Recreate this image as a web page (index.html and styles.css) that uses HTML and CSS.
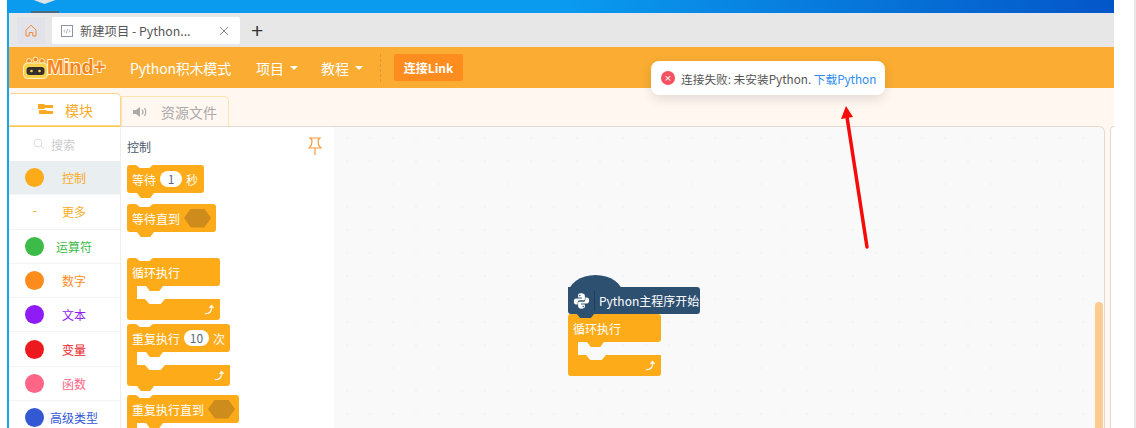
FILE: index.html
```html
<!DOCTYPE html>
<html lang="zh-CN">
  <head>
    <meta charset="UTF-8" />
    <title>Mind+ Python</title>
    <link rel="stylesheet" href="styles.css">
  </head>
  <body>
    <div class="desktop">
      <i class="desktop-icon"></i>
      <i class="desktop-label"></i>
    </div>
    <div class="window">
      <div class="tabbar">
        <div class="home-tab">
          <svg width="12" height="13" viewBox="0 0 12 13"><path d="M1 6 6 1.200 11 6V12H7.800V8.500H4.200V12H1Z" fill="none" stroke="#f08a3c" stroke-width="1"/></svg>
        </div>
        <div class="page-tab">
          <svg width="12" height="12" viewBox="0 0 12 12"><rect x=".5" y=".5" width="11" height="11" fill="none" stroke="#8b95a5"/><path d="M4 4.500 2.800 6 4 7.500M8 4.500 9.200 6 8 7.500M6.600 4 5.400 8" fill="none" stroke="#8b95a5" stroke-width=".7"/></svg>
          <span class="page-title">新建项目 - Python...</span>
          <svg class="page-close" width="10" height="10" viewBox="0 0 10 10"><path d="M1 1 9 9M9 1 1 9" stroke="#888" stroke-width="1"/></svg>
        </div>
        <span class="new-tab">+</span>
      </div>

      <div class="navbar">
        <div class="logo">
          <svg width="27" height="24" viewBox="0 0 27 24">
            <circle cx="7" cy="5" r="2.400" fill="#f5851f" stroke="#fff2c8"/>
            <circle cx="13.500" cy="3.500" r="2.400" fill="#f5851f" stroke="#fff2c8"/>
            <circle cx="20" cy="5" r="2.400" fill="#f5851f" stroke="#fff2c8"/>
            <rect x="1.500" y="7" width="24" height="15.500" rx="4" fill="#fbd04b" stroke="#fff2c8"/>
            <rect x="4.500" y="11" width="18" height="8" rx="3" fill="#33302c"/>
            <circle cx="9.500" cy="15" r="1.300" fill="#fbd04b"/>
            <circle cx="17.500" cy="15" r="1.300" fill="#fbd04b"/>
          </svg>
          <span class="logo-text">Mind+</span>
        </div>
        <a class="nav-item mode">Python积木模式</a>
        <a class="nav-item project">项目<i class="caret"></i></a>
        <a class="nav-item course">教程<i class="caret"></i></a>
        <div class="divider"></div>
        <a class="link-btn">连接Link</a>
      </div>

      <div class="tabs-row">
        <div class="tab active-tab">
          <svg width="15" height="11" viewBox="0 0 15 11"><path d="M0 0H6L7 1H15V4H7L6 5H0ZM1 6H8L9 7H15V10H1Z" fill="#fbab23"/></svg>
          <span>模块</span>
        </div>
        <div class="tab">
          <svg width="15" height="12" viewBox="0 0 15 12"><path d="M0 4H3L7 1V11L3 8H0Z" fill="#a9a9a9"/><path d="M9 3.500Q11 6 9 8.500M11.500 2Q14 6 11.500 10" fill="none" stroke="#a9a9a9" stroke-width="1.200"/></svg>
          <span>资源文件</span>
        </div>
      </div>

      <div class="workspace">
        <div class="categories">
          <div class="search">
            <svg width="12" height="12" viewBox="0 0 12 12"><circle cx="5" cy="5" r="4" fill="none" stroke="#ddd"/><path d="M8 8 11 11" stroke="#ddd"/></svg>
            <span>搜索</span>
          </div>
          <div class="cat selected"><i class="dot dot-control"></i><span class="c-control">控制</span></div>
          <div class="cat"><i class="dash"></i><span class="c-control">更多</span></div>
          <div class="cat"><i class="dot dot-op"></i><span class="c-op">运算符</span></div>
          <div class="cat"><i class="dot dot-num"></i><span class="c-num">数字</span></div>
          <div class="cat"><i class="dot dot-text"></i><span class="c-text">文本</span></div>
          <div class="cat"><i class="dot dot-var"></i><span class="c-var">变量</span></div>
          <div class="cat"><i class="dot dot-fn"></i><span class="c-fn">函数</span></div>
          <div class="cat"><i class="dot dot-adv"></i><span class="c-adv">高级类型</span></div>
        </div>

        <div class="flyout">
          <div class="flyout-head">
            <span>控制</span>
            <svg width="14" height="18" viewBox="0 0 14 18"><path d="M2 1H12L10 3 10.500 8 13 11H1L3.500 8 4 3ZM7 11V18" fill="none" stroke="#fb9a3c" stroke-width="1.200"/></svg>
          </div>
          <div class="block b-wait">等待 <b class="pill">1</b> 秒<i class="notch"></i></div>
          <div class="block b-until">等待直到 <b class="hex"></b><i class="notch"></i></div>
          <div class="loop l-forever">
            <div class="block loop-top">循环执行</div>
            <div class="loop-gap"><i class="inner-notch"></i></div>
            <div class="loop-foot"><i class="foot-notch"></i><span class="loop-arrow">⤴</span></div>
          </div>
          <div class="loop l-repeat">
            <div class="block loop-top">重复执行 <b class="pill wide">10</b> 次</div>
            <div class="loop-gap"><i class="inner-notch"></i></div>
            <div class="loop-foot"><i class="foot-notch"></i><span class="loop-arrow">⤴</span><i class="notch"></i></div>
          </div>
          <div class="loop l-until">
            <div class="block loop-top">重复执行直到 <b class="hex"></b></div>
            <div class="loop-gap"><i class="inner-notch"></i></div>
          </div>
        </div>

        <div class="canvas">
          <div class="stack">
            <div class="hat">
              <div class="hat-cap"></div>
              <div class="hat-body">
                <svg class="py" width="17" height="18" viewBox="0 0 20 20">
                  <path d="M10 1C6 1 6 2.500 6 4V6H10.500V7H3.500C2 7 1 8.500 1 10.500S2 14 3.500 14H5.500V11.500C5.500 10 6.500 9 8 9H12.500C13.500 9 14 8.500 14 7.500V4C14 2 12.500 1 10 1Z" fill="#fff"/>
                  <path d="M10 19C14 19 14 17.500 14 16V14H9.500V13H16.500C18 13 19 11.500 19 9.500S18 6 16.500 6H14.500V8.500C14.500 10 13.500 11 12 11H7.500C6.500 11 6 11.500 6 12.500V16C6 18 7.500 19 10 19Z" fill="#fff"/>
                  <circle cx="8" cy="3.500" r=".9" fill="#2e5070"/>
                  <circle cx="12" cy="16.500" r=".9" fill="#2e5070"/>
                </svg>
                <i class="hat-sep"></i>
                <span>Python主程序开始</span>
              </div>
              <i class="hat-notch"></i>
            </div>
            <div class="loop l-main">
              <div class="block loop-top">循环执行</div>
              <div class="loop-gap"><i class="inner-notch"></i></div>
              <div class="loop-foot"><i class="foot-notch"></i><span class="loop-arrow">⤴</span></div>
            </div>
          </div>
          <div class="scrollbar"></div>
        </div>
        <div class="right-panel"></div>
      </div>

      <div class="toast">
        <i class="toast-icon">×</i>
        <span>连接失败: 未安装Python. <a class="toast-link">下载Python</a></span>
      </div>

      <svg class="red-arrow" width="32" height="150" viewBox="0 0 32 150">
        <path d="M28 142 8 12" stroke="#f60a0a" stroke-width="3.500" stroke-linecap="round"/>
        <path d="M7 1 2 14 14 12Z" fill="#f60a0a"/>
      </svg>
    </div>
  </body>
</html>
```

FILE: styles.css
```css
* {
  box-sizing: border-box;
}

html,
body {
  margin: 0;
  height: 428px;
  overflow: hidden;
  background: #fff;
}

body {
  font-family: "Noto Sans CJK SC", "Noto Sans", sans-serif;
  font-size: 12px;
  color: #333;
  border-right: 2px solid #e8e8e8;
}

.desktop {
  position: relative;
  height: 13px;
  margin-left: 7px;
  margin-right: 20px;
  overflow: hidden;
  background: linear-gradient(90deg, #0a9bef 0%, #0a9bef 50%, #0456c8 100%);
}

.desktop-icon {
  position: absolute;
  left: 26px;
  top: -3px;
  width: 23px;
  height: 7px;
  background: #dfe3e6;
  clip-path: polygon(0 0, 100% 0, 100% 40%, 50% 100%, 0 40%);
}

.desktop-label {
  position: absolute;
  left: 24px;
  bottom: 0;
  width: 28px;
  height: 2px;
  background: #4a6a80;
}

.window {
  position: relative;
  height: 415px;
  margin-left: 7px;
  margin-right: 20px;
  border-left: 2px solid #15a5e8;
  background: #fff;
}

/* Browser tabs */
.tabbar {
  display: flex;
  align-items: center;
  height: 34px;
  padding: 4px 0 3px 8px;
  background: #e7e7e7;
}

.home-tab {
  display: flex;
  align-items: center;
  justify-content: center;
  width: 28px;
  height: 27px;
  background: #e1e2ea;
}

.page-tab {
  display: flex;
  align-items: center;
  width: 188px;
  height: 27px;
  margin-left: 7px;
  padding-left: 9px;
  background: #fff;
  border-radius: 2px;
}

.page-title {
  margin-left: 7px;
  font-size: 12.3px;
  color: #555;
}

.page-close {
  margin-left: auto;
  margin-right: 11px;
}

.new-tab {
  margin-left: 11px;
  font-family: "Liberation Sans", sans-serif;
  font-size: 21px;
  line-height: 21px;
  color: #333;
}

/* Orange app bar */
.navbar {
  display: flex;
  align-items: center;
  height: 41px;
  padding-left: 13px;
  background: #faad32;
  color: #fff;
}

.logo {
  display: flex;
  align-items: center;
  width: 108px;
}

.logo-text {
  margin-left: -2px;
  font-family: "Liberation Sans", sans-serif;
  font-size: 20px;
  font-weight: 700;
  color: #f5851f;
  -webkit-text-stroke: 2px #fff4dc;
  paint-order: stroke fill;
}

.nav-item {
  display: flex;
  align-items: center;
  font-size: 14px;
  color: #fff;
}

.mode {
  width: 126px;
  letter-spacing: -0.2px;
}

.project {
  width: 65px;
}

.course {
  width: 59px;
}

.caret {
  margin-left: 6px;
  border-left: 4px solid transparent;
  border-right: 4px solid transparent;
  border-top: 4px solid #fff;
}

.divider {
  width: 0;
  height: 28px;
  border-left: 1px dashed #d59a3e;
}

.link-btn {
  width: 69px;
  height: 27px;
  margin-left: 13px;
  border-radius: 2px;
  background: #ff8c1e;
  font-size: 12px;
  font-weight: 700;
  line-height: 27px;
  text-align: center;
  color: #fff;
}

/* Blocks / assets tabs */
.tabs-row {
  display: flex;
  align-items: flex-end;
  height: 38px;
  background: #fff7f0;
}

.tab {
  display: flex;
  align-items: center;
  justify-content: center;
  gap: 13px;
  width: 108px;
  height: 30px;
  border: 1px solid #fde4b0;
  border-bottom: 0;
  border-radius: 0 5px 0 0;
  font-size: 14px;
  color: #a9a9a9;
}

.active-tab {
  width: 112px;
  height: 33px;
  gap: 12px;
  padding-left: 2px;
  background: #fff;
  border: 1px solid #fdd58c;
  border-left: 0;
  border-radius: 3px 5px 0 0;
  box-shadow: 0 1px 0 #fdc65a;
  color: #fbab23;
}

.workspace {
  display: flex;
  height: 302px;
  background: #fff7f0;
}

/* Category column */
.categories {
  width: 112px;
  flex-shrink: 0;
  background: #fff;
  border-top: 1px solid #fdc65a;
  border-right: 1px solid #eee;
}

.search {
  display: flex;
  align-items: center;
  gap: 6px;
  height: 34px;
  padding-left: 24px;
  color: #ccc;
}

.cat {
  display: grid;
  grid-template-columns: 19px 1fr;
  align-items: center;
  height: 34.3px;
  padding-left: 16px;
  border-bottom: 1px solid #f2f4f6;
  text-align: center;
  font-size: 12px;
}

.selected {
  background: #e9eef1;
}

.dot {
  width: 19px;
  height: 19px;
  border-radius: 50%;
}

.dash {
  justify-self: center;
  width: 3px;
  height: 1px;
  background: #fbab23;
}

.cat span {
  margin-right: 16px;
}

.dot-control { background: #fdab19; }
.dot-op { background: #3dbb48; }
.dot-num { background: #fe8c1d; }
.dot-text { background: #8f1cf5; }
.dot-var { background: #ec1a1e; }
.dot-fn { background: #fe6586; }
.dot-adv { background: #3358d4; }

.c-control { color: #fbab23; }
.c-op { color: #3dbb48; }
.c-num { color: #fe8c1d; }
.c-text { color: #8f1cf5; }
.c-var { color: #ec1a1e; }
.c-fn { color: #fe6586; }
.c-adv { color: #3358d4; }

/* Block flyout */
.flyout {
  --bg: #fff;
  width: 213px;
  flex-shrink: 0;
  padding: 0 6px;
  background: var(--bg);
  border-top: 1px solid #e4d9cf;
  overflow: hidden;
}

.flyout-head {
  display: flex;
  align-items: center;
  justify-content: space-between;
  height: 38px;
  padding-right: 6px;
  font-size: 12px;
  color: #4c5a6b;
}

.block {
  position: relative;
  display: flex;
  align-items: center;
  gap: 4px;
  height: 28px;
  padding-left: 5px;
  background: #fdab19;
  border-radius: 3px;
  font-size: 12px;
  color: #fff;
  white-space: nowrap;
}

/* dent in the top edge of a stackable block */
.block::before {
  content: "";
  position: absolute;
  top: 0;
  left: 9px;
  width: 17px;
  height: 3px;
  background: var(--bg);
  clip-path: polygon(0 0, 100% 0, 78% 100%, 22% 100%);
}

.notch,
.inner-notch {
  position: absolute;
  width: 17px;
  height: 5px;
  background: #fdab19;
  clip-path: polygon(0 0, 100% 0, 78% 100%, 22% 100%);
}

.notch {
  bottom: -5px;
  left: 10px;
}

.pill {
  display: inline-block;
  width: 22px;
  height: 16px;
  border-radius: 8px;
  background: #fff;
  font-weight: 400;
  line-height: 16px;
  text-align: center;
  color: #5a6a80;
}

.pill.wide {
  width: 25px;
}

.hex {
  display: inline-block;
  width: 27px;
  height: 19px;
  background: #cd8c1b;
  clip-path: polygon(25% 0, 75% 0, 100% 50%, 75% 100%, 25% 100%, 0 50%);
}

.b-wait {
  width: 77px;
}

.b-until {
  width: 89px;
  margin-top: 11px;
}

.loop {
  position: relative;
  display: block;
}

.l-forever {
  width: 93px;
  margin-top: 26px;
}

.l-repeat {
  width: 103px;
  margin-top: 4px;
}

.l-until {
  width: 112px;
  margin-top: 9px;
}

.l-main {
  width: 93px;
}

.loop-top {
  border-bottom-left-radius: 0;
}

.loop-gap {
  position: relative;
  height: 13px;
  border-left: 10px solid #fdab19;
}

.inner-notch {
  top: 0;
  left: 9px;
}

.loop-foot {
  position: relative;
  display: flex;
  align-items: center;
  justify-content: flex-end;
  height: 21px;
  padding-right: 6px;
  background: #fdab19;
  border-radius: 0 0 3px 3px;
}

.foot-notch {
  position: absolute;
  top: 0;
  left: 18px;
  width: 20px;
  height: 5px;
  background: var(--bg);
  clip-path: polygon(0 0, 100% 0, 78% 100%, 22% 100%);
}

.loop-arrow {
  font-family: "DejaVu Sans", sans-serif;
  font-size: 9px;
  font-weight: 700;
  color: #fff;
}

/* Canvas */
.canvas {
  --bg: #f9f9f9;
  position: relative;
  flex: 1;
  background-color: var(--bg);
  background-image: radial-gradient(circle, #e6e6e6 0.8px, transparent 1px);
  background-size: 23px 23px;
  background-position: 1.500px -0.500px;
  border-top: 1px solid #e4d9cf;
  border-right: 1px solid #e4d9cf;
  border-top-right-radius: 6px;
}

.stack {
  position: absolute;
  left: 234px;
  top: 148px;
}

.hat {
  position: relative;
  width: 132px;
}

.hat-cap {
  width: 55px;
  height: 20px;
  margin-bottom: -8px;
  background: #2e5070;
  border-radius: 50% 50% 0 0 / 100% 100% 0 0;
}

.hat-body {
  position: relative;
  display: flex;
  align-items: center;
  height: 27px;
  padding-left: 5px;
  background: #2e5070;
  border-radius: 0 3px 3px 3px;
  font-size: 12px;
  white-space: nowrap;
  color: #fff;
}

.hat-sep {
  flex-shrink: 0;
  width: 1px;
  height: 20px;
  margin: 0 4px;
  background: #213d57;
}

.hat-notch {
  position: absolute;
  bottom: -4px;
  left: 8px;
  width: 19px;
  height: 5px;
  background: #2e5070;
  clip-path: polygon(0 0, 100% 0, 78% 100%, 22% 100%);
  z-index: 1;
}

.l-main .block::before {
  display: none;
}

.scrollbar {
  position: absolute;
  right: 1px;
  top: 175px;
  bottom: 0;
  width: 8px;
  border-radius: 4px 4px 0 0;
  background: #fbcb92;
}

.right-panel {
  width: 4px;
  margin-left: 5px;
  border-top: 1px solid #e4d9cf;
  border-left: 1px solid #e4d9cf;
  border-top-left-radius: 5px;
  background: #fff;
}

/* Error toast over the app bar */
.toast {
  position: absolute;
  left: 642px;
  top: 48px;
  display: flex;
  align-items: center;
  gap: 6px;
  width: 234px;
  height: 34px;
  padding-left: 10px;
  background: #fff;
  border-radius: 8px;
  box-shadow: 0 4px 12px rgba(0, 0, 0, 0.12);
  font-size: 11.7px;
  color: #555;
  white-space: nowrap;
}

.toast-icon {
  flex-shrink: 0;
  width: 14px;
  height: 14px;
  border-radius: 50%;
  background: #f5515f;
  font-family: "Liberation Sans", sans-serif;
  font-style: normal;
  line-height: 14px;
  text-align: center;
  color: #fff;
}

.toast-link {
  color: #2d8cf0;
}

.red-arrow {
  position: absolute;
  left: 830px;
  top: 92px;
}
```
